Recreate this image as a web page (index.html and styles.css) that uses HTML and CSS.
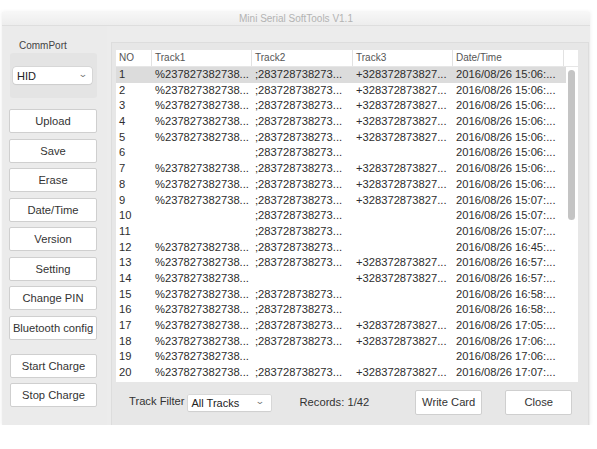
FILE: index.html
```html
<!DOCTYPE html>
<html>
<head>
<meta charset="utf-8">
<link rel="stylesheet" href="styles.css">
</head>
<body>
<div class="window">
  <div class="titlebar">Mini Serial SoftTools V1.1</div>
  <div class="content">
    <div class="left">
      <div class="label">CommPort</div>
      <div class="group">
        <div class="select port"><span>HID</span><span class="chev">&#8964;</span></div>
      </div>
      <div class="btns">
        <div class="btn">Upload</div>
        <div class="btn">Save</div>
        <div class="btn">Erase</div>
        <div class="btn">Date/Time</div>
        <div class="btn">Version</div>
        <div class="btn">Setting</div>
        <div class="btn">Change PIN</div>
        <div class="btn">Bluetooth config</div>
      </div>
      <div class="btns charge">
        <div class="btn">Start Charge</div>
        <div class="btn">Stop Charge</div>
      </div>
    </div>
    <div class="right">
      <div class="table">
        <div class="thead">
          <div class="th">NO</div>
          <div class="th">Track1</div>
          <div class="th">Track2</div>
          <div class="th">Track3</div>
          <div class="th">Date/Time</div>
          <div class="th last"></div>
        </div>
        <div class="tbody">
          <div class="rows" id="rows"></div>
          <div class="scroll"><div class="thumb"></div></div>
        </div>
      </div>
      <div class="bottom">
        <span class="tf">Track Filter</span>
        <div class="select filter"><span>All Tracks</span><span class="chev">&#8964;</span></div>
        <span class="records">Records: 1/42</span>
        <div class="btn write">Write Card</div>
        <div class="btn close">Close</div>
      </div>
    </div>
  </div>
</div>
<script>
var t1='%237827382738...', t2=';283728738273...', t3='+328372873827...';
var data=[
[1,1,1,1,'2016/08/26 15:06:...'],
[2,1,1,1,'2016/08/26 15:06:...'],
[3,1,1,1,'2016/08/26 15:06:...'],
[4,1,1,1,'2016/08/26 15:06:...'],
[5,1,1,1,'2016/08/26 15:06:...'],
[6,0,1,0,'2016/08/26 15:06:...'],
[7,1,1,1,'2016/08/26 15:06:...'],
[8,1,1,1,'2016/08/26 15:06:...'],
[9,1,1,1,'2016/08/26 15:07:...'],
[10,0,1,0,'2016/08/26 15:07:...'],
[11,0,1,0,'2016/08/26 15:07:...'],
[12,1,1,0,'2016/08/26 16:45:...'],
[13,1,1,1,'2016/08/26 16:57:...'],
[14,1,0,1,'2016/08/26 16:57:...'],
[15,1,1,0,'2016/08/26 16:58:...'],
[16,1,1,0,'2016/08/26 16:58:...'],
[17,1,1,1,'2016/08/26 17:05:...'],
[18,1,1,1,'2016/08/26 17:06:...'],
[19,1,0,0,'2016/08/26 17:06:...'],
[20,1,1,1,'2016/08/26 17:07:...']
];
var h='';
data.forEach(function(r,i){
  h+='<div class="row'+(i===0?' sel':'')+'"><div class="td">'+r[0]+'</div><div class="td">'+(r[1]?t1:'')+'</div><div class="td">'+(r[2]?t2:'')+'</div><div class="td">'+(r[3]?t3:'')+'</div><div class="td">'+r[4]+'</div></div>';
});
document.getElementById('rows').innerHTML=h;
</script>
</body>
</html>
```

FILE: styles.css
```css
* { box-sizing: border-box; }
body {
  margin: 0;
  background: #ffffff;
  font-family: "Liberation Sans", Arial, sans-serif;
  color: #2b2b2b;
}
.window {
  margin: 12px 0 0 2px;
  width: 588px;
  height: 413px;
  background: #ececec;
  box-shadow: 0 0 4px rgba(0,0,0,0.08);
  display: flex;
  flex-direction: column;
}
.titlebar {
  height: 14px;
  background: linear-gradient(#f7f7f7, #ededed);
  border-bottom: 1px solid #dedede;
  text-align: center;
  font-size: 10px;
  line-height: 14px;
  color: #b3b3b3;
}
.content {
  flex: 1;
  display: flex;
  padding: 0 0 0 1px;
}
.left {
  width: 104px;
  display: flex;
  flex-direction: column;
  padding: 14px 9px 0 6px;
  background: #ebebeb;
}
.label {
  font-size: 10px;
  color: #444;
  padding-left: 10px;
  height: 12px;
  line-height: 12px;
}
.group {
  margin-top: 1px;
  width: 87px;
  height: 45px;
  margin-left: 1px;
  background: #e4e4e4;
  border-radius: 3px;
  padding: 14px 0 0 3px;
}
.select {
  background: #fff;
  border-radius: 3px;
  box-shadow: 0 0 0 0.5px #c9c9c9, 0 1px 1px rgba(0,0,0,0.08);
  display: flex;
  align-items: center;
  justify-content: space-between;
  font-size: 11px;
  color: #222;
}
.port {
  width: 79px;
  height: 17px;
  padding: 0 5px 0 4px;
}
.chev {
  font-size: 9px;
  color: #777;
  line-height: 8px;
  transform: scaleX(1.3);
  margin-top: -4px;
}
.btns {
  display: flex;
  flex-direction: column;
  gap: 5.5px;
  margin-top: 11px;
}
.btn {
  height: 24px;
  background: #fff;
  border: 1px solid #cfcfcf;
  border-radius: 2px;
  display: flex;
  align-items: center;
  justify-content: center;
  font-size: 11.2px;
  color: #333;
  white-space: nowrap;
}
.left .btn { width: 88px; margin-left: 0; }
.charge { margin-top: 14px; }
.charge .btn { width: 87px; margin-left: 1px; }
.right {
  margin: 16px 0 0 4px;
  width: 478px;
  background: #e7e7e7;
  border: 1px solid #dddddd;
  border-bottom: none;
  padding: 7px 0 0 4px;
  display: flex;
  flex-direction: column;
}
.table {
  width: 462px;
  height: 332px;
  background: #fff;
  display: flex;
  flex-direction: column;
}
.thead {
  height: 17px;
  display: flex;
  border-bottom: 1px solid #e6e6e6;
}
.th {
  font-size: 10px;
  color: #555;
  padding-left: 3px;
  line-height: 16px;
  border-right: 1px solid #e2e2e2;
}
.th:nth-child(1), .td:nth-child(1) { width: 36px; }
.th:nth-child(2), .td:nth-child(2) { width: 100px; }
.th:nth-child(3), .td:nth-child(3) { width: 101px; }
.th:nth-child(4), .td:nth-child(4) { width: 100px; }
.th:nth-child(5) { width: 111px; }
.td:nth-child(5) { width: 113px; }
.th.last { flex: 1; border-right: none; }
.tbody {
  flex: 1;
  display: flex;
}
.rows { width: 450px; }
.row {
  height: 15.7px;
  display: flex;
  font-size: 11.2px;
  line-height: 15.7px;
  color: #2e2e2e;
}
.row.sel { background: #dcdcdc; }
.td {
  padding-left: 3px;
  white-space: nowrap;
  overflow: hidden;
}
.scroll {
  width: 12px;
  padding: 3px 0 0 2px;
}
.thumb {
  width: 7px;
  height: 150px;
  border-radius: 4px;
  background: #c4c4c4;
}
.bottom {
  display: flex;
  align-items: center;
  height: 40px;
  padding-left: 13px;
  font-size: 11.2px;
  color: #333;
}
.tf { margin-right: 3px; margin-top: -2px; }
.filter {
  width: 83px;
  height: 16px;
  padding: 0 7px 0 4px;
  border-radius: 1px;
  margin-top: 2px;
}
.records { margin-left: 29px; }
.bottom .btn { width: 67px; height: 25px; }
.write { margin-left: 46px; }
.close { margin-left: 23px; }
```
